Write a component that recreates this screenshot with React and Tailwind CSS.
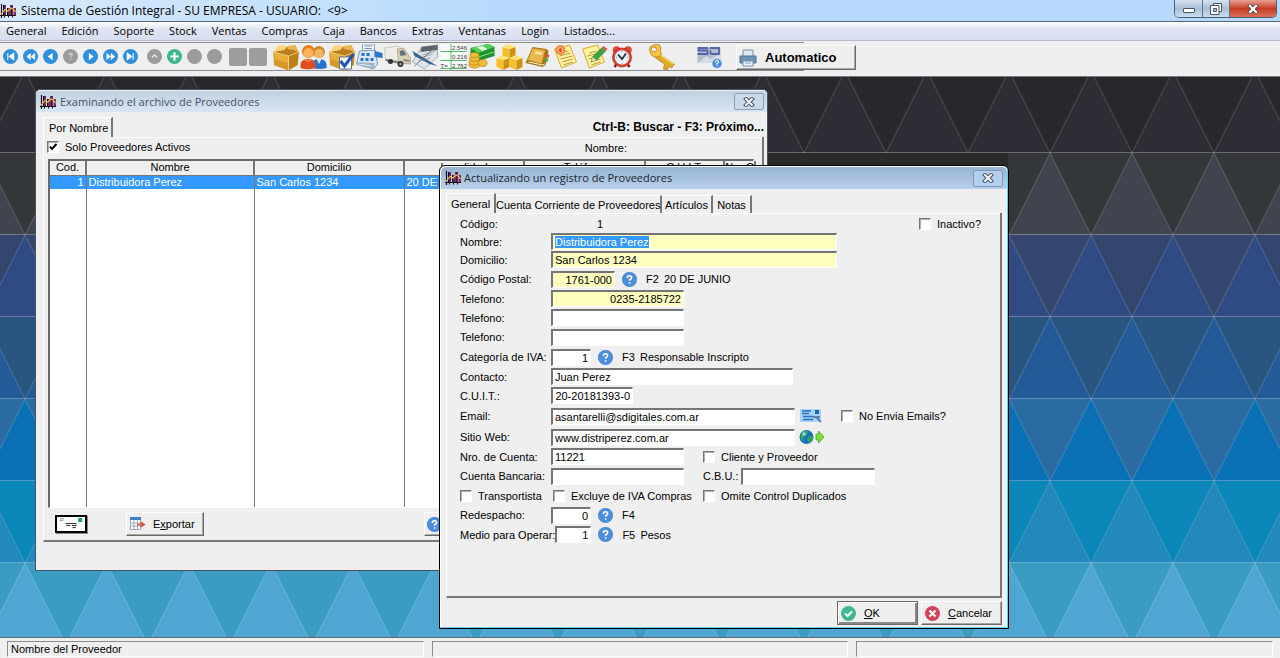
import React, { useEffect, useRef } from "react";

const CELL = 82;
const BANDS = [
  ["#28272c", "#2e2c35"],
  ["#33373a", "#40444f"],
  ["#34466e", "#304b83"],
  ["#28557f", "#225b97"],
  ["#2a6ca2", "#0a70b6"],
  ["#0a86b8", "#2389bd"],
  ["#3b9cc1", "#50a6d3"],
];

function Wallpaper() {
  const columns = Array.from({ length: 34 }, (_, i) => i);
  return (
    <svg className="absolute inset-0 h-full w-full bg-[#50a6d3]" aria-hidden="true">
      {BANDS.map(([down, up], row) => {
        const top = row * CELL - 6;
        const bottom = top + CELL;
        const shift = row % 2 === 0 ? 25 : -16;
        return (
          <g key={row}>
            <rect x="0" y={top} width="100%" height={CELL} fill={down} />
            {columns.map((c) => {
              const x = shift + (c - 1) * CELL;
              return (
                <polygon
                  key={c}
                  points={`${x},${top} ${x + 41},${bottom} ${x - 41},${bottom}`}
                  fill={up}
                  stroke="#ffffff"
                  strokeOpacity="0.18"
                />
              );
            })}
            <line x1="0" x2="100%" y1={bottom - 0.5} y2={bottom - 0.5} stroke="#ffffff" strokeOpacity="0.22" />
          </g>
        );
      })}
      <rect x="768" y="76" width="240" height="14" fill="#2b2a2a" />
    </svg>
  );
}

function AppIcon() {
  return (
    <svg viewBox="0 0 16 14" className="h-[14px] w-4 shrink-0" aria-hidden="true">
      <path d="M1.500 0v14M0 11.500h16" stroke="#1a1018" strokeWidth="1.200" />
      <path d="M3 1h3v10H3zM7 4h3v7H7zM10.500 1h2.500v10h-2.500zM13.500 4H16v7h-2.500z" fill="#7a2a66" />
      <path d="M3 1h1.200v10H3zM7 4h1v7H7zM10.500 1h1.200v10h-1.200z" fill="#1d0d1b" />
      <path d="M4.500 11v2.500M8.500 11v2.500M12.500 11v2.500" stroke="#1a1018" />
      <path d="M1 10.500 5 5.500l3 1.500L11 4l2 1 2.500 3" fill="none" stroke="#efc04a" strokeWidth="1.200" />
    </svg>
  );
}

const GLYPHS = {
  first: <path d="M4.500 4v6M10 4 6 7l4 3z" fill="#fff" stroke="#fff" />,
  rewind: <path d="M7 4 3.500 7 7 10zM11 4 7.500 7 11 10z" fill="#fff" stroke="#fff" strokeWidth=".4" />,
  prev: <path d="M9 3.500 4.500 7 9 10.500z" fill="#fff" />,
  play: <path d="M5.500 3.500 10 7l-4.500 3.500z" fill="#fff" />,
  forward: <path d="M3.500 4 7 7l-3.500 3zM7.500 4 11 7l-3.500 3z" fill="#fff" stroke="#fff" strokeWidth=".4" />,
  last: <path d="M9.500 4v6M4 4l4 3-4 3z" fill="#fff" stroke="#fff" />,
  up: <path d="M4.500 8 7 5.500 9.500 8" fill="none" stroke="#e8e8e8" strokeWidth="1.300" />,
  ask: <path d="M5.500 5.500Q5.500 4 7 4t1.500 1.400Q8.500 6.400 7 7.300M7 9v1" fill="none" stroke="#d8d8d8" strokeWidth="1.200" />,
  plus: <path d="M7 3v8M3 7h8" stroke="#fff" strokeWidth="2" />,
  none: null,
};

function Dot({ label, glyph, color }) {
  return (
    <button type="button" aria-label={label} className="flex h-7 w-5 items-center justify-center">
      <svg viewBox="0 0 14 14" className="size-[15px]">
        <circle cx="7" cy="7" r="7" fill={color} />
        {GLYPHS[glyph]}
      </svg>
    </button>
  );
}

function HelpIcon() {
  return (
    <svg viewBox="0 0 14 14" className="size-[15px] shrink-0">
      <circle cx="7" cy="7" r="6.900" fill="#4c8edb" stroke="#3b78c8" strokeWidth=".3" />
      <path d="M5 5.500Q5 3.500 7 3.500t2 1.800Q9 6.300 7.100 7.200v1M7.100 9.500V11" fill="none" stroke="#fff" strokeWidth="1.500" />
    </svg>
  );
}

const BOX = (
  <g>
    <path d="M1 8 8 2l16 2 2 4-10 5z" fill="#b87d1c" />
    <path d="M1 8l15 4v14L2 21z" fill="#e9ae3a" />
    <path d="M2 15l14 4v7L2 21z" fill="#d9982a" />
    <path d="M16 12l10-4-1 13-9 5z" fill="#bd7f17" />
    <path d="M1 8 6 1l9 1-3 4z" fill="#ffd778" />
    <path d="M15 2l8-1 3 7-5-2-6-1z" fill="#eab54b" />
    <path d="M1 8l15 4 10-4M16 12v14" fill="none" stroke="#fbd98a" strokeWidth=".8" />
    <path d="M1 8l1 13 14 5 9-5 1-13" fill="none" stroke="#b0781a" strokeWidth=".5" />
  </g>
);

const note = (
  <g>
    <path d="M2 5 17 1l7 17-15 6z" fill="#fff3a0" stroke="#d8aa3c" />
    <path d="M9 9l7-2M7 12l11-3M8 15l12-3M10 18l10-3M11 21l9-3" stroke="#b9973c" strokeWidth="1" />
  </g>
);

const TOOLS = [
  ["Artículos", BOX],
  [
    "Clientes",
    <g>
      <circle cx="18.500" cy="8" r="6" fill="#c98a2a" />
      <circle cx="18.500" cy="9.500" r="4.500" fill="#f2b765" />
      <path d="M12 24v-5q1-4 6-4 7 0 8 5v4q-7 2-14 0z" fill="#2872cf" />
      <path d="M16 15l2.500 5 2.500-5z" fill="#d9ecff" />
      <circle cx="8" cy="7.500" r="6.500" fill="#ee7b1c" />
      <circle cx="8" cy="9" r="5" fill="#f9b45c" />
      <path d="M0 24v-4q1-5 8-5 7 0 7 6v3q-8 2.500-15 0z" fill="#df4b22" />
      <path d="M4 15.500l4 2 3-2" fill="none" stroke="#ffb27a" />
    </g>,
  ],
  [
    "Control de stock",
    <g>
      {BOX}
      <path d="M11 13h12v12H11z" fill="#fff" stroke="#5f7598" />
      <path d="M12 17l4 5 9-12" fill="none" stroke="#1e53b5" strokeWidth="3" />
    </g>,
  ],
  [
    "Caja registradora",
    <g>
      <path d="M6 0h12v8H6z" fill="#f3f8fc" stroke="#93a6b8" />
      <path d="M8 2h8M8 4.500h7" stroke="#7a8fa3" />
      <path d="M3 7l16-1 2 14-4 5-17-5z" fill="#dbe7f2" stroke="#8097ad" />
      <path d="M0 18l18 1-1 6-17-4z" fill="#9db3c8" />
      <path d="M2 20l13 2" stroke="#e6eef5" />
      <path d="M5 9h3v3H5zM10 9h3v3h-3zM4 14h3v3H4zM9 14h3v3H9zM14 14h3v3h-3z" fill="#2874c8" />
      <path d="M18 7l8 2v5l-8-1z" fill="#2b77c6" />
    </g>,
  ],
  [
    "Envíos",
    <g>
      <path d="M0 4l13-2 3 2v13L1 15z" fill="#eeede6" stroke="#bbbab2" strokeWidth=".7" />
      <path d="M1 15l15 3v2L1 17z" fill="#77766e" />
      <path d="M13 5l6-1 5 7 2 3v6l-12-1z" fill="#dcd2b8" stroke="#9b927a" strokeWidth=".7" />
      <path d="M15 7l4-1 3 5-6 1z" fill="#60717d" />
      <path d="M19 15l6 1v2l-6-1z" fill="#8c8676" />
      <circle cx="6" cy="17.500" r="2.500" fill="#333" />
      <circle cx="16" cy="20" r="3" fill="#333" />
      <circle cx="16" cy="20" r="1.200" fill="#aaa" />
    </g>,
  ],
  [
    "Cheques",
    <g>
      <path d="M9 3 25 1v12L12 25 0 18z" fill="#dfe4e8" stroke="#7d8790" strokeWidth=".6" />
      <path d="M9 3 25 1v5L8 8z" fill="#59616a" />
      <path d="M10 11l13-4M8 14l12-4M6 17l12-3" stroke="#9ba5ad" />
      <path d="M0 7l5 3 20 12-8-2L2 12z" fill="#38658f" />
      <path d="M25 1 2 22" stroke="#6d7a86" />
    </g>,
  ],
  [
    "Totales",
    <g>
      <path d="M0 0h26v26H0z" fill="#f8fbf8" />
      <path d="M0 7.500h26M0 16.500h26M10.500 0v26M0 24.500h26" stroke="#54b66a" />
      <g fill="#333" fontFamily="Liberation Sans, sans-serif" fontSize="6">
        <text x="11.500" y="5.500">2.546</text>
        <text x="11.500" y="14.500">0.216</text>
        <text x="0" y="23.500">T=</text>
        <text x="11.500" y="23.500">2.762</text>
      </g>
    </g>,
  ],
  [
    "Cobranzas",
    <g>
      <path d="M2 4 20 0l6 3v9l-16 5-8-7z" fill="#1f9331" />
      <path d="M2 4 20 0l6 3-16 6z" fill="#55cf58" />
      <path d="M8 3l6-1 5 3-5 2z" fill="#e5f9df" />
      <path d="M3 9l7 4 15-5" fill="none" stroke="#8be084" />
      <g fill="#f1bc38" stroke="#b37b12" strokeWidth=".7">
        <ellipse cx="6" cy="21" rx="5.500" ry="3" />
        <ellipse cx="6" cy="18" rx="5.500" ry="3" />
        <ellipse cx="6" cy="14.500" rx="5" ry="2.800" />
        <ellipse cx="6" cy="11" rx="4.500" ry="2.500" />
        <ellipse cx="14" cy="19" rx="4.500" ry="3.500" />
      </g>
    </g>,
  ],
  [
    "Depósitos",
    <g>
      {[
        [6, 0],
        [0, 11],
        [13, 11],
      ].map(([x, y]) => (
        <g key={x} transform={`translate(${x} ${y})`}>
          <path d="M0 3l7 2v10l-7-3z" fill="#f4bf2a" />
          <path d="M7 5l6-2v9l-6 3z" fill="#d1930f" />
          <path d="M0 3l6-3 7 3-6 2z" fill="#ffe273" />
        </g>
      ))}
    </g>,
  ],
  [
    "Libro diario",
    <g>
      <path d="M8 3 22 5l2 2-3 14-3 2-17-4z" fill="#a8741a" />
      <path d="M8 4 21 6l-4 14-14-4z" fill="#e8b64a" stroke="#b58022" strokeWidth=".7" />
      <path d="M11 7l7 1-1 3-7-1z" fill="#f8e09a" />
      <path d="M22 10l3 1-1 3-3-1z" fill="#ee4e35" />
      <path d="M21 14l3 1-1 3-3-1z" fill="#4aab4b" />
      <path d="M4 18l14 3 2-1" fill="none" stroke="#fff4d0" />
    </g>,
  ],
  [
    "Notas",
    <g>
      {note}
      <circle cx="8" cy="6" r="5" fill="#f28a3c" />
      <circle cx="8" cy="6" r="2.500" fill="#e4562f" stroke="#ffc89d" />
    </g>,
  ],
  [
    "Editar notas",
    <g>
      {note}
      <path d="M11 18l1-5 9-9 4 3-9 9z" fill="#39a544" stroke="#24702c" strokeWidth=".7" />
      <path d="M21 4l2-2 4 3-2 2z" fill="#e2574b" />
      <path d="M11 18l1-5 4 3z" fill="#f5d9a5" />
    </g>,
  ],
  [
    "Agenda",
    <g>
      <path d="M8 20l-2 3M19 20l2 3" stroke="#8d1e18" strokeWidth="2.500" />
      <circle cx="8" cy="6" r="3.800" fill="#e0483c" />
      <circle cx="19.500" cy="6" r="3.800" fill="#e0483c" />
      <circle cx="13.500" cy="13.500" r="9.500" fill="#dd4237" stroke="#a3261e" strokeWidth=".7" />
      <circle cx="13.500" cy="13.500" r="7.200" fill="#e9f4fb" />
      <path d="M9.500 10.500l4 4.500 4-5.500" fill="none" stroke="#25303a" strokeWidth="1.800" />
      <path d="M13.500 7v1M13.500 19v1M7.500 13.500h1M18.500 13.500h1" stroke="#7799af" />
    </g>,
  ],
];

function Tool({ label, children, className = "" }) {
  return (
    <button type="button" aria-label={label} className={`h-7 w-7 shrink-0 ${className}`}>
      <svg viewBox="0 0 27 27" className="size-7 pt-px">
        {children}
      </svg>
    </button>
  );
}

const KEY = (
  <g>
    <path d="M10 9l16 11-3 4-3-2-1 4-4-1 1-5-9-6z" fill="#e3ab25" stroke="#a47310" strokeWidth=".7" />
    <path d="M11 10l14 10" stroke="#ffe27d" strokeWidth="1.500" />
    <path d="M1 5q0-3 4-4 3-1 6 0 2 2 1 6l1 3q-2 4-6 3l-3-1Q1 10 1 5z" fill="#f3c544" stroke="#a47310" strokeWidth=".7" />
    <circle cx="5.500" cy="5.500" r="2.500" fill="#efefef" stroke="#a47310" strokeWidth=".7" />
  </g>
);

const LOGO = (
  <g>
    <path d="M1 4h23v15H1z" fill="#b3bccb" />
    <path d="M1 19 10 12l4 3 10-6v10z" fill="#d5dbe6" />
    <path d="M11.500 4H2v2.500h9V10H1" fill="none" stroke="#5364ab" strokeWidth="1.800" />
    <path d="M14 10V6.500M13 4h9.500v6H14" fill="none" stroke="#5364ab" strokeWidth="1.800" />
    <circle cx="20.500" cy="19.500" r="5" fill="#4c8edb" stroke="#dbe8f8" strokeWidth=".7" />
    <path d="M19 18.500q0-2 1.500-2t1.500 1.500q0 1-1.500 1.700v1M20.500 21.500v1" fill="none" stroke="#fff" strokeWidth="1.100" />
  </g>
);

const MENUS = [
  "General", "Edición", "Soporte", "Stock", "Ventas", "Compras",
  "Caja", "Bancos", "Extras", "Ventanas", "Login", "Listados...",
];

const RAISED =
  "border border-t-white border-l-white border-r-[#696969] border-b-[#696969] shadow-[inset_-1px_-1px_0_#a8a8a8]";

function TitleX({ label, className }) {
  return (
    <button type="button" aria-label={label} className={`flex h-[17px] w-[30px] items-center justify-center rounded-[2px] border ${className}`}>
      <svg viewBox="0 0 12 10" className="h-[10px] w-3">
        <path d="M3 2l6 6M9 2 3 8" stroke="#4a5562" strokeWidth="4" strokeLinecap="square" />
        <path d="M3 2l6 6M9 2 3 8" stroke="#f4f6f8" strokeWidth="2" strokeLinecap="square" />
      </svg>
    </button>
  );
}

function TopBars() {
  return (
    <header>
      <div className="flex h-[22px] items-start justify-between border-b border-[#52657c] bg-gradient-to-r from-[#d6e9fc] via-[#b7dafc] via-40% to-[#b7dafc]">
        <div className="flex h-[21px] items-center gap-[5px] text-xs">
          <AppIcon />
          <h1 className="whitespace-pre">Sistema de Gestión Integral - SU EMPRESA - USUARIO:  &lt;9&gt;</h1>
        </div>
        <div className="mr-[3px] flex h-[18px] overflow-hidden rounded-b-[5px] border border-t-0 border-[#4c5d70]">
          <button type="button" aria-label="Minimizar" className="flex w-7 items-end justify-center border-r border-[#5f7186] bg-gradient-to-b from-[#d5e4f3] via-[#a9c0d6] to-[#c6def3] pb-1">
            <span className="h-[5px] w-3 rounded-[1px] border border-[#4a5562] bg-white" />
          </button>
          <button type="button" aria-label="Restaurar" className="flex w-[27px] items-center justify-center border-r border-[#5f7186] bg-gradient-to-b from-[#d5e4f3] via-[#a9c0d6] to-[#c6def3]">
            <svg viewBox="0 0 12 12" className="size-3">
              <path d="M3.500.5h8v8h-8z" fill="#fff" stroke="#4a5562" />
              <path d="M.5 2.500h8.500v9H.5z" fill="#fff" stroke="#4a5562" />
              <path d="M3.500 5.500h3v3h-3z" fill="#a9c0d6" stroke="#4a5562" />
            </svg>
          </button>
          <button type="button" aria-label="Cerrar" className="flex w-[46px] items-center justify-center bg-gradient-to-b from-[#e9a193] via-[#c53a22] to-[#dd7059]">
            <svg viewBox="0 0 12 10" className="h-[10px] w-3">
              <path d="M3 2l6 6M9 2 3 8" stroke="#563a3a" strokeWidth="4" strokeLinecap="square" />
              <path d="M3 2l6 6M9 2 3 8" stroke="#fff" strokeWidth="2.400" strokeLinecap="square" />
            </svg>
          </button>
        </div>
      </div>
      <nav className="flex h-[19px] items-center gap-[15px] border-b border-[#b6bbcd] bg-gradient-to-b from-white via-[#dfe5f3] via-40% to-[#d7def0] pl-[6px] text-[11px]">
        {MENUS.map((m) => (
          <button key={m} type="button">{m}</button>
        ))}
      </nav>
      <div className="flex h-[35px] items-start bg-[#efefef] pt-px">
        <div className="flex h-[29px] items-center border-y border-[#8c8c8c]">
          <Dot label="Primero" glyph="first" color="#2f8fdc" />
          <Dot label="Página anterior" glyph="rewind" color="#2f8fdc" />
          <Dot label="Anterior" glyph="prev" color="#2f8fdc" />
          <Dot label="Consultar" glyph="ask" color="#9b9b9b" />
          <Dot label="Siguiente" glyph="play" color="#2f8fdc" />
          <Dot label="Página siguiente" glyph="forward" color="#2f8fdc" />
          <Dot label="Último" glyph="last" color="#2f8fdc" />
          <span className="w-1" />
          <Dot label="Subir" glyph="up" color="#9b9b9b" />
          <Dot label="Agregar" glyph="plus" color="#3bb68d" />
          <Dot label="Modificar" glyph="none" color="#9b9b9b" />
          <Dot label="Borrar" glyph="none" color="#9b9b9b" />
          <button type="button" aria-label="Cortar" className="ml-[5px] size-[18px] rounded-[2px] bg-[#9e9e9e]" />
          <button type="button" aria-label="Pegar" className="ml-[2px] mr-[5px] size-[18px] rounded-[2px] bg-[#9e9e9e]" />
          {TOOLS.map(([label, icon]) => (
            <Tool key={label} label={label}>{icon}</Tool>
          ))}
          <Tool label="Claves" className="ml-3">{KEY}</Tool>
          <Tool label="Acerca de" className="ml-5">{LOGO}</Tool>
          <span className="w-20" />
        </div>
        <button type="button" className={`-ml-[68px] mt-[3px] flex h-[25px] w-[120px] items-center gap-2 bg-[#efefef] pl-[2px] font-['Liberation_Sans',Arial,sans-serif] text-[13px] font-bold ${RAISED}`}>
          <svg viewBox="0 0 18 18" className="size-[18px]">
            <path d="M4 1h10v7H4z" fill="#dce9f5" stroke="#7790a8" />
            <path d="M1 7h16v7H1z" fill="#6f94b8" stroke="#4f7090" />
            <path d="M4 12h10v5H4z" fill="#f1f6fb" stroke="#7790a8" />
            <path d="M6 14h6" stroke="#7aa6cf" />
          </svg>
          Automatico
        </button>
      </div>
    </header>
  );
}

const COLUMNS = [
  ["Cod.", "w-[36px]"],
  ["Nombre", "w-[168px]"],
  ["Domicilio", "w-[150px]"],
  ["Localidad", "w-[120px]"],
  ["Teléfono", "w-[121px]"],
  ["C.U.I.T.", "w-[79px]"],
  ["Nro.C", "w-[31px]"],
];
const SUPPLIERS = [["1", "Distribuidora Perez", "San Carlos 1234", "20 DE", "", "", ""]];

function Check({ children, checked, className = "" }) {
  return (
    <label className={`flex items-center gap-[6px] whitespace-nowrap ${className}`}>
      <span className="relative flex size-3">
        <input
          type="checkbox"
          defaultChecked={checked}
          className="peer size-3 appearance-none border border-t-[#757575] border-l-[#757575] border-r-white border-b-white bg-white shadow-[inset_1px_1px_0_#b0b0b0]"
        />
        <svg viewBox="0 0 12 12" className="pointer-events-none absolute inset-0 hidden size-3 peer-checked:block">
          <path d="M3 5.500 5 8l4.500-5" fill="none" stroke="#000" strokeWidth="2" />
        </svg>
      </span>
      {children}
    </label>
  );
}

function SupplierList() {
  return (
    <section className="absolute left-[35px] top-3 flex h-[482px] w-[733px] flex-col rounded-t-[5px] border border-[#47525e] bg-[#efefef]">
      <div className="flex h-[22px] shrink-0 items-center gap-1 rounded-t-[5px] border-t border-[#e6eef6] bg-gradient-to-b from-[#c1d1e1] to-[#d8e5f2] pl-1 pr-[3px]">
        <AppIcon />
        <h2 className="flex-1 font-['Open_Sans','Noto_Sans',sans-serif] text-[11px] text-[#4b535c]">Examinando el archivo de Proveedores</h2>
        <TitleX label="Cerrar lista" className="border-[#8b9fb6] bg-[#cbdaea]" />
      </div>
      <div className="flex flex-1 flex-col pb-[28px] pl-[7px] pr-[3px] pt-[5px]">
        <div className="flex h-5 items-stretch justify-between">
          <button type="button" role="tab" className="w-[70px] border-l border-t border-l-white border-t-white border-r-2 border-r-[#777] pl-[5px] text-left">Por Nombre</button>
          <strong className="flex items-center text-xs">Ctrl-B: Buscar - F3: Próximo...</strong>
        </div>
        <div className="flex flex-1 flex-col border-b-2 border-l border-r-2 border-b-[#777] border-l-white border-r-[#777] pl-[3px] pr-2">
          <div className="-mr-2 ml-[66px] border-t border-white" />
          <div className="flex h-[21px] justify-between">
            <Check checked className="h-[18px]">Solo Proveedores Activos</Check>
            <span className="mr-[127px] leading-5">Nombre:</span>
          </div>
          <div className="ml-px h-[349px] border border-l-2 border-t-2 border-l-[#696969] border-t-[#696969] border-r-white border-b-white bg-white">
            <table className="h-full w-full table-fixed border-collapse">
              <thead>
                <tr className="h-[14px]">
                  {COLUMNS.map(([name, width]) => (
                    <th key={name} className={`${width} h-[14px] whitespace-nowrap border-b border-r-2 border-[#777] bg-[#efefef] p-0 font-normal leading-[13px]`}>{name}</th>
                  ))}
                </tr>
              </thead>
              <tbody>
                {SUPPLIERS.map((row) => (
                  <tr key={row[0]} className="h-[14px] bg-[#3399ff] text-white">
                    {row.map((cell, i) => (
                      <td key={i} className={`overflow-hidden whitespace-nowrap border-r border-[#777] px-[2px] py-0 leading-[13px] ${i === 0 ? "text-right" : ""}`}>{cell}</td>
                    ))}
                  </tr>
                ))}
                <tr>
                  {COLUMNS.map(([name]) => (
                    <td key={name} className="border-r border-[#777]" />
                  ))}
                </tr>
              </tbody>
            </table>
          </div>
          <div className="flex flex-1 items-center pl-2">
            <button type="button" aria-label="Enviar correo" className="flex h-[18px] w-8 justify-end border-2 border-black bg-white p-px shadow-[1px_1px_0_#888]">
              <svg viewBox="0 0 28 15" className="h-full w-full">
                <path d="M0 1h5M0 3h4" stroke="#555" strokeWidth=".8" />
                <path d="M7 7h14M8 9.500h5M15 9.500h6M16 12h4" stroke="#222" strokeWidth="1.200" />
                <path d="M23 0h5v5h-5z" fill="#2f9b55" />
              </svg>
            </button>
            <button type="button" className={`ml-[39px] flex h-6 w-[78px] items-center gap-[6px] pl-[2px] ${RAISED}`}>
              <svg viewBox="0 0 18 16" className="h-4 w-[18px]">
                <path d="M1.500 1.500h10v12h-10z" fill="#fff" stroke="#9aa6b4" />
                <path d="M1 1h11v3H1z" fill="#3d7fc4" />
                <path d="M1 7h11M1 10h11M5 4v10M8.500 4v10" stroke="#9aa6b4" />
                <path d="M8 8.500h6M12.500 6.500l3 2-3 2z" fill="#d9553d" stroke="#d9553d" strokeWidth="1.300" />
              </svg>
              <span>E<u>x</u>portar</span>
            </button>
            <button type="button" aria-label="Ayuda de lista" className={`ml-[220px] flex h-6 w-[78px] items-center pl-[2px] ${RAISED}`}>
              <HelpIcon />
            </button>
          </div>
        </div>
      </div>
    </section>
  );
}

const FIELD =
  "h-[17px] border-2 border-r border-b border-t-[#757575] border-l-[#757575] border-r-white border-b-white px-[2px] leading-[13px] outline-none selection:bg-[#3399ff] selection:text-white";

function Field({ id, label, value = "", width, yellow, right, inputRef, rowClass = "h-[19px]", children }) {
  return (
    <div className={`flex items-center ${rowClass}`}>
      <label htmlFor={id} className="min-w-[91px] shrink-0 whitespace-nowrap">{label}</label>
      <input
        id={id}
        ref={inputRef}
        defaultValue={value}
        className={`${FIELD} ${width} ${yellow ? "bg-[#ffffc0]" : "bg-white"} ${right ? "text-right" : ""}`}
      />
      {children}
    </div>
  );
}

function Lookup({ keyName, text, label }) {
  return (
    <span className="ml-[7px] flex items-center">
      <button type="button" aria-label={label}>
        <HelpIcon />
      </button>
      <span className="ml-[9px] w-[18px]">{keyName}</span>
      <span>{text}</span>
    </span>
  );
}

function SupplierForm() {
  const nameRef = useRef(null);
  useEffect(() => {
    nameRef.current.focus();
    nameRef.current.select();
  }, []);
  const tab = "h-[18px] shrink-0 whitespace-nowrap border-t border-r-2 border-t-white border-r-[#777] text-center";
  return (
    <section className="absolute left-[439px] top-[88px] flex h-[464px] w-[570px] flex-col rounded-t-[6px] border border-black bg-[#efefef] shadow-[inset_-1px_-1px_0_#5fd0ee,inset_1px_1px_0_#fff]">
      <div className="mx-px mt-px flex h-[22px] shrink-0 items-center gap-[3px] rounded-t-[5px] bg-gradient-to-b from-[#97b4d2] to-[#b8d0ea] pl-1 pr-1">
        <AppIcon />
        <h2 className="flex-1 font-['Open_Sans','Noto_Sans',sans-serif] text-[11px] text-[#1b2530]">Actualizando un registro de Proveedores</h2>
        <TitleX label="Cerrar formulario" className="border-[#7f9cc0] bg-[#b5d0ee]" />
      </div>
      <form className="flex flex-1 flex-col px-[6px] pt-[4px]" onSubmit={(e) => e.preventDefault()}>
        <div role="tablist" className="flex h-5 items-end">
          <button type="button" role="tab" className="h-5 w-[50px] border-l border-t border-l-white border-t-white border-r-2 border-r-[#777] pl-1 text-left">General</button>
          <button type="button" role="tab" className={`${tab} w-[166px]`}>Cuenta Corriente de Proveedores</button>
          <button type="button" role="tab" className={`${tab} w-[51px]`}>Artículos</button>
          <button type="button" role="tab" className={`${tab} w-[39px]`}>Notas</button>
        </div>
        <div className="flex h-[385px] flex-col border-b-2 border-l border-r-2 border-b-[#777] border-l-white border-r-[#777]">
          <div className="ml-[49px] border-t border-white" />
          <div className="flex flex-col pl-[13px]">
            <div className="flex h-[19px] items-center">
              <span className="w-[91px]">Código:</span>
              <output className="w-[52px] text-right">1</output>
              <Check className="ml-auto mr-[19px]">Inactivo?</Check>
            </div>
            <Field id="nombre" label="Nombre:" value="Distribuidora Perez" width="w-[286px]" yellow inputRef={nameRef} rowClass="h-[17px]" />
            <Field id="domicilio" label="Domicilio:" value="San Carlos 1234" width="w-[286px]" yellow />
            <Field id="cp" label="Código Postal:" value="1761-000" width="w-16" yellow right rowClass="h-5">
              <Lookup keyName="F2" text="20 DE JUNIO" label="Buscar código postal" />
            </Field>
            <Field id="tel1" label="Telefono:" value="0235-2185722" width="w-[133px]" yellow right />
            <Field id="tel2" label="Telefono:" width="w-[133px]" />
            <Field id="tel3" label="Telefono:" width="w-[133px]" rowClass="h-5" />
            <Field id="iva" label="Categoría de IVA:" value="1" width="w-10" right rowClass="h-5">
              <Lookup keyName="F3" text="Responsable Inscripto" label="Buscar categoría de IVA" />
            </Field>
            <Field id="contacto" label="Contacto:" value="Juan Perez" width="w-[242px]" />
            <Field id="cuit" label="C.U.I.T.:" value="20-20181393-0" width="w-[82px]" right />
            <Field id="email" label="Email:" value="asantarelli@sdigitales.com.ar" width="w-[244px]" rowClass="h-[22px]">
              <button type="button" aria-label="Enviar email" className="ml-[5px]">
                <svg viewBox="0 0 22 14" className="h-[14px] w-[22px]">
                  <path d="M0 0h21v13H0z" fill="#a7d2f6" />
                  <path d="M2 2h9M2 4.500h7M3 7.500h11M3 10.500h10" stroke="#2870bd" strokeWidth="1.300" />
                  <path d="M15 1h4v4h-4z" fill="#1d66b4" />
                  <path d="M13 8h7M16 8l5 5" stroke="#5b83aa" strokeWidth="1.800" />
                </svg>
              </button>
              <Check className="ml-[19px]">No Envia Emails?</Check>
            </Field>
            <Field id="web" label="Sitio Web:" value="www.distriperez.com.ar" width="w-[244px]" rowClass="h-5">
              <button type="button" aria-label="Abrir sitio web" className="ml-1">
                <svg viewBox="0 0 26 14" className="h-[14px] w-[26px]">
                  <circle cx="7.500" cy="7" r="7" fill="#1b6fc2" />
                  <path d="M2 3q3-3 7-2l-1 4-4 3 1 4Q0 9 2 3zM10 6l4 0q0 5-4 7l-2-4z" fill="#2fa35a" />
                  <circle cx="5" cy="4" r="2" fill="#a9dcf5" opacity=".7" />
                  <path d="M17 4h2.500V1L25 7l-5.500 6v-3H17z" fill="#7edc3b" stroke="#43a524" strokeWidth=".8" />
                </svg>
              </button>
            </Field>
            <Field id="cuenta" label="Nro. de Cuenta:" value="11221" width="w-[133px]">
              <Check className="ml-[19px]">Cliente y Proveedor</Check>
            </Field>
            <Field id="bancaria" label="Cuenta Bancaria:" width="w-[133px]" rowClass="h-5">
              <label htmlFor="cbu" className="ml-[19px] w-[38px]">C.B.U.:</label>
              <input id="cbu" className={`${FIELD} w-[134px] bg-white`} />
            </Field>
            <div className="flex h-[19px] items-center">
              <Check className="w-[93px]">Transportista</Check>
              <Check className="w-[150px]">Excluye de IVA Compras</Check>
              <Check>Omite Control Duplicados</Check>
            </div>
            <Field id="redespacho" label="Redespacho:" value="0" width="w-10" right rowClass="h-5">
              <Lookup keyName="F4" text="" label="Buscar redespacho" />
            </Field>
            <Field id="medio" label="Medio para Operar:" value="1" width="w-9" right>
              <Lookup keyName="F5" text="Pesos" label="Buscar medio" />
            </Field>
          </div>
        </div>
        <div className="flex items-center justify-end gap-[3px] pt-[3px]">
          <button type="submit" className="flex h-6 w-[81px] items-center gap-2 border border-[#696969] pl-[3px] shadow-[inset_1px_1px_0_#fff,inset_-2px_-2px_0_#888]">
            <svg viewBox="0 0 15 15" className="size-[15px]">
              <circle cx="7.500" cy="7.500" r="7.500" fill="#3fb795" />
              <path d="M4 7.500 6.500 10 11 5.500" fill="none" stroke="#fff" strokeWidth="2" />
            </svg>
            <span><u>O</u>K</span>
          </button>
          <button type="button" className={`flex h-6 w-[81px] items-center gap-2 pl-[3px] ${RAISED}`}>
            <svg viewBox="0 0 15 15" className="size-[15px]">
              <circle cx="7.500" cy="7.500" r="7.500" fill="#d5405a" />
              <path d="M4.500 4.500l6 6M10.500 4.500l-6 6" stroke="#fff" strokeWidth="2.200" />
            </svg>
            <span><u>C</u>ancelar</span>
          </button>
        </div>
      </form>
    </section>
  );
}

export default function App() {
  const panel = "h-4 flex-1 border border-t-[#8c8c8c] border-l-[#8c8c8c] border-r-white border-b-white pl-[3px]";
  return (
    <div className="flex min-h-screen flex-col bg-[#efefef] font-['Open_Sans','Noto_Sans',sans-serif] text-black">
      <TopBars />
      <main className="relative min-h-[561px] flex-1 overflow-hidden border-t border-[#777] font-['Liberation_Sans',Arial,sans-serif] text-[11px] leading-[14px]">
        <Wallpaper />
        <SupplierList />
        <SupplierForm />
      </main>
      <footer className="flex h-[21px] items-center gap-2 border-t border-[#5b6b74] bg-[#efefef] px-[7px] pt-px font-['Liberation_Sans',Arial,sans-serif] text-[11px] leading-[14px]">
        <div className={panel}>Nombre del Proveedor</div>
        <div className={panel} />
        <div className={panel} />
      </footer>
    </div>
  );
}
